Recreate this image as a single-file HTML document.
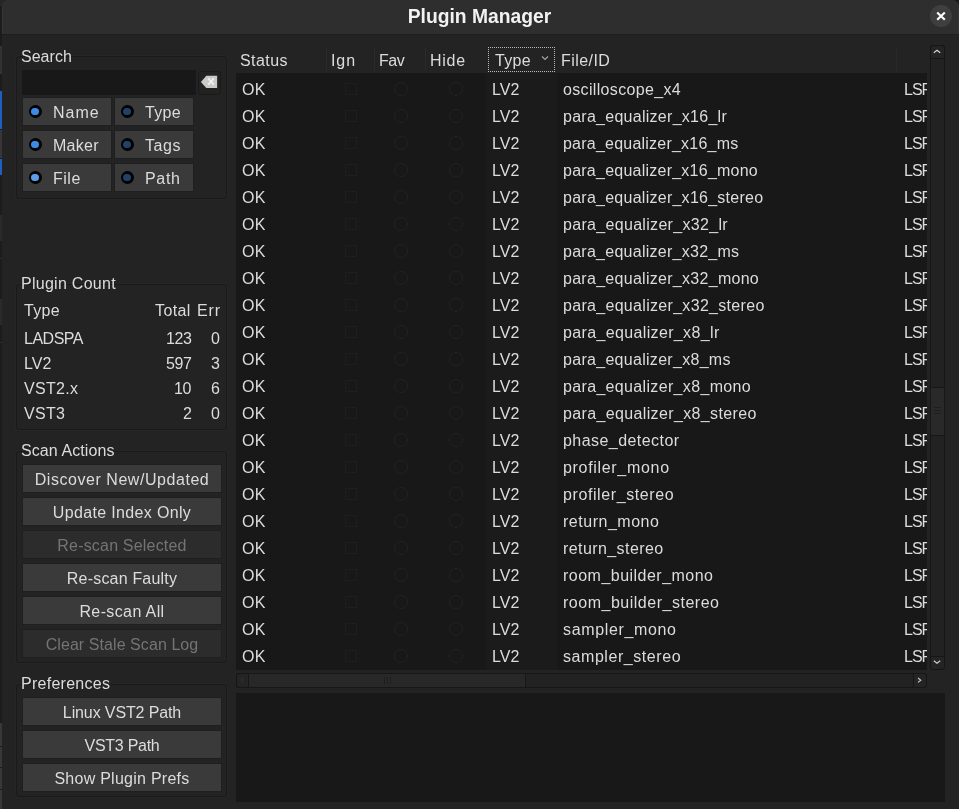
<!DOCTYPE html><html><head><meta charset="utf-8"><style>
*{margin:0;padding:0}
html,body{width:959px;height:809px;overflow:hidden;background:#1c1c1c}
.abs{position:absolute}
.t{position:absolute;font-family:"Liberation Sans",sans-serif;font-size:16px;line-height:18px;color:#dcdcdc;white-space:nowrap;will-change:transform}
.bold{font-weight:bold;color:#f2f2f2}
.lbl{color:#dcdcdc}
.dist{color:#747474}
#win{position:absolute;left:2px;top:20px;width:957px;height:840px;background:#232323}
#title{position:absolute;left:2px;top:0;width:957px;height:34px;background:#2e2e2e;border-radius:8px 8px 0 0;border-bottom:1px solid #1f1f1f;box-shadow:inset 1px 0 0 #363636,inset -1px 0 0 #363636}
#close{position:absolute;left:930px;top:5px;width:22px;height:22px;border-radius:50%;background:#3f3f3f}
#close svg{position:absolute;left:0;top:0}
.frame{position:absolute;border:1px solid #1a1a1a;border-radius:3px;box-shadow:0 0 0 1px #262626}
.btn{position:absolute;background:#3a3a3a;box-shadow:0 0 0 1px #1f1f1f}
.btn.dis{background:#2c2c2c}
.led{position:absolute;width:13px;height:13px;border-radius:50%;background:#000}
.led div{position:absolute;left:2.75px;top:2.75px;width:7.5px;height:7.5px;border-radius:50%}
.clr{position:absolute;left:198px;top:71px;width:23px;height:24px;border:1px solid #1a1a1a;border-radius:3px;background:#222;box-sizing:border-box}
.clr svg{position:absolute;left:-2px;top:-2px}
.circ{width:12px;height:12px;border:1px solid #222;border-radius:50%}
</style></head><body><div class="abs" style="left:0;top:0;width:12px;height:6px;background:#262626"></div>
<div class="abs" style="left:0;top:46px;width:2px;height:28px;background:#333"></div>
<div class="abs" style="left:0;top:91px;width:2px;height:38px;background:#1f5fbf"></div>
<div class="abs" style="left:0;top:130px;width:2px;height:28px;background:#363636"></div>
<div class="abs" style="left:0;top:159px;width:2px;height:16px;background:#1f5fbf"></div>
<div class="abs" style="left:0;top:723px;width:2px;height:86px;background:#383838"></div>
<div class="abs" style="left:0;top:214px;width:2px;height:28px;background:#2a2a2a;border-top:1px solid #1c1c1c;border-bottom:1px solid #1c1c1c;box-sizing:border-box"></div>
<div class="abs" style="left:0;top:298px;width:2px;height:28px;background:#2a2a2a;border-top:1px solid #1c1c1c;border-bottom:1px solid #1c1c1c;box-sizing:border-box"></div>
<div class="abs" style="left:0;top:258px;width:2px;height:1px;background:#2c2c2c"></div>
<div class="abs" style="left:0;top:342px;width:2px;height:1px;background:#2c2c2c"></div>
<div class="abs" style="left:0;top:746px;width:2px;height:1px;background:#1c1c1c"></div>
<div class="abs" style="left:0;top:767px;width:2px;height:1px;background:#1c1c1c"></div>
<div class="abs" style="left:0;top:789px;width:2px;height:1px;background:#1c1c1c"></div>
<div id="win"></div>
<div id="title"></div>
<div class="t bold" style="left:0;width:959px;text-align:center;top:6px;font-size:19.3px;line-height:22px">Plugin Manager</div>
<div id="close"><svg width="22" height="22" viewBox="0 0 22 22"><path d="M7.2 7.4 L14.8 14.8 M14.8 7.4 L7.2 14.8" stroke="#fff" stroke-width="2.1" stroke-linecap="butt"/></svg></div>
<div class="frame" style="left:16px;top:56px;width:209px;height:141px"></div>
<div class="frame" style="left:16px;top:284px;width:209px;height:144px"></div>
<div class="frame" style="left:16px;top:451px;width:209px;height:210px"></div>
<div class="frame" style="left:16px;top:684px;width:209px;height:111px"></div>
<div class="t lbl" style="left:21px;top:48px;letter-spacing:0.02px;">Search</div>
<div class="t lbl" style="left:21px;top:275px;letter-spacing:0.27px;">Plugin Count</div>
<div class="t lbl" style="left:21px;top:442px;letter-spacing:0.09px;">Scan Actions</div>
<div class="t lbl" style="left:21px;top:675px;letter-spacing:0.27px;">Preferences</div>
<div class="abs" style="left:22px;top:70px;width:174px;height:25px;background:#181818"></div>
<div class="clr"><svg width="24" height="24" viewBox="0 0 24 24"><path d="M3.9 11.9 L9.3 5.7 H20.1 V18 H9.3 Z" fill="#c9cbc6"/><path d="M11.3 8.4 L16.8 14.6 M16.8 8.4 L11.3 14.6" stroke="#f2f2f2" stroke-width="1.6"/></svg></div>
<div class="btn" style="left:23px;top:98px;width:88px;height:27px"></div>
<div class="led" style="left:28.5px;top:105px"><div style="background:#3a8be6"></div></div>
<div class="t " style="left:53px;top:104px;letter-spacing:1.0px;">Name</div>
<div class="btn" style="left:115px;top:98px;width:78px;height:27px"></div>
<div class="led" style="left:120.5px;top:105px"><div style="background:#21406a"></div></div>
<div class="t " style="left:145px;top:104px;letter-spacing:0.3px;">Type</div>
<div class="btn" style="left:23px;top:131px;width:88px;height:27px"></div>
<div class="led" style="left:28.5px;top:138px"><div style="background:#3a8be6"></div></div>
<div class="t " style="left:53px;top:137px;letter-spacing:0.25px;">Maker</div>
<div class="btn" style="left:115px;top:131px;width:78px;height:27px"></div>
<div class="led" style="left:120.5px;top:138px"><div style="background:#21406a"></div></div>
<div class="t " style="left:145px;top:137px;letter-spacing:0.6px;">Tags</div>
<div class="btn" style="left:23px;top:164px;width:88px;height:27px"></div>
<div class="led" style="left:28.5px;top:171px"><div style="background:#5a9de8"></div></div>
<div class="t " style="left:53px;top:170px;letter-spacing:0.5px;">File</div>
<div class="btn" style="left:115px;top:164px;width:78px;height:27px"></div>
<div class="led" style="left:120.5px;top:171px"><div style="background:#21406a"></div></div>
<div class="t " style="left:145px;top:170px;letter-spacing:0.7px;">Path</div>
<div class="t " style="left:24px;top:302px;letter-spacing:0.3px;">Type</div>
<div class="t " style="right:768.6px;top:302px;letter-spacing:0.4px;">Total</div>
<div class="t " style="right:738.1px;top:302px;letter-spacing:0.9px;">Err</div>
<div class="t " style="left:24px;top:330px;letter-spacing:-0.5px;">LADSPA</div>
<div class="t " style="right:767.7px;top:330px;letter-spacing:-0.4px;">123</div>
<div class="t " style="right:738.7px;top:330px;letter-spacing:0;">0</div>
<div class="t " style="left:24px;top:355px;letter-spacing:0px;">LV2</div>
<div class="t " style="right:767.7px;top:355px;letter-spacing:-0.4px;">597</div>
<div class="t " style="right:738.7px;top:355px;letter-spacing:0;">3</div>
<div class="t " style="left:24px;top:380px;letter-spacing:0.3px;">VST2.x</div>
<div class="t " style="right:767.7px;top:380px;letter-spacing:-0.4px;">10</div>
<div class="t " style="right:738.7px;top:380px;letter-spacing:0;">6</div>
<div class="t " style="left:24px;top:405px;letter-spacing:0.3px;">VST3</div>
<div class="t " style="right:767.7px;top:405px;letter-spacing:-0.4px;">2</div>
<div class="t " style="right:738.7px;top:405px;letter-spacing:0;">0</div>
<div class="btn" style="left:23px;top:465px;width:198px;height:27px"></div>
<div class="t " style="left:-27.725px;width:300px;text-align:center;top:471px;letter-spacing:0.55px;">Discover New/Updated</div>
<div class="btn" style="left:23px;top:498px;width:198px;height:27px"></div>
<div class="t " style="left:-27.825px;width:300px;text-align:center;top:504px;letter-spacing:0.35px;">Update Index Only</div>
<div class="btn dis" style="left:23px;top:531px;width:198px;height:27px"></div>
<div class="t dist" style="left:-27.905px;width:300px;text-align:center;top:537px;letter-spacing:0.19px;">Re-scan Selected</div>
<div class="btn" style="left:23px;top:564px;width:198px;height:27px"></div>
<div class="t " style="left:-27.905px;width:300px;text-align:center;top:570px;letter-spacing:0.19px;">Re-scan Faulty</div>
<div class="btn" style="left:23px;top:597px;width:198px;height:27px"></div>
<div class="t " style="left:-27.81px;width:300px;text-align:center;top:603px;letter-spacing:0.38px;">Re-scan All</div>
<div class="btn dis" style="left:23px;top:630px;width:198px;height:27px"></div>
<div class="t dist" style="left:-27.965px;width:300px;text-align:center;top:636px;letter-spacing:0.07px;">Clear Stale Scan Log</div>
<div class="btn" style="left:23px;top:698px;width:198px;height:27px"></div>
<div class="t " style="left:-28.06px;width:300px;text-align:center;top:704px;letter-spacing:-0.12px;">Linux VST2 Path</div>
<div class="btn" style="left:23px;top:731px;width:198px;height:27px"></div>
<div class="t " style="left:-28.135px;width:300px;text-align:center;top:737px;letter-spacing:-0.27px;">VST3 Path</div>
<div class="btn" style="left:23px;top:764px;width:198px;height:27px"></div>
<div class="t " style="left:-27.87px;width:300px;text-align:center;top:770px;letter-spacing:0.26px;">Show Plugin Prefs</div>
<div class="t " style="left:239.5px;top:52px;letter-spacing:0.42px;">Status</div>
<div class="t " style="left:330.5px;top:52px;letter-spacing:0.9px;">Ign</div>
<div class="t " style="left:378.5px;top:52px;letter-spacing:-0.4px;">Fav</div>
<div class="t " style="left:429.5px;top:52px;letter-spacing:0.75px;">Hide</div>
<div class="t " style="left:494.5px;top:52px;letter-spacing:0.3px;">Type</div>
<div class="t " style="left:560.5px;top:52px;letter-spacing:0.45px;">File/ID</div>
<div class="abs" style="left:326px;top:48px;width:1px;height:23px;background:#2a2a2a"></div>
<div class="abs" style="left:374px;top:48px;width:1px;height:23px;background:#2a2a2a"></div>
<div class="abs" style="left:425px;top:48px;width:1px;height:23px;background:#2a2a2a"></div>
<div class="abs" style="left:896px;top:48px;width:1px;height:23px;background:#2a2a2a"></div>
<div class="abs" style="left:488px;top:47px;width:67px;height:25px;border:1px dotted #b8b8b8;box-sizing:border-box"></div>
<svg class="abs" style="left:540px;top:54px" width="10" height="8" viewBox="0 0 10 8"><path d="M2 2.5 L5 5.5 L8 2.5" stroke="#9aa6b2" stroke-width="1.2" fill="none"/></svg>
<div class="abs" style="left:236px;top:73px;width:691px;height:597px;background:#181818;overflow:hidden" id="list">
<div class="abs" style="left:250px;top:0;width:71px;height:597px;background:#1b1b1b"></div>
<div class="t " style="left:6px;top:8px;letter-spacing:0.3px;">OK</div>
<div class="abs" style="left:109px;top:10px;width:10px;height:10px;border:1px solid #1e1e1e"></div>
<div class="abs circ" style="left:157.8px;top:9px"></div>
<div class="abs circ" style="left:212.5px;top:9px"></div>
<div class="t " style="left:255.5px;top:8px;letter-spacing:0px;">LV2</div>
<div class="t " style="left:327px;top:8px;letter-spacing:0.343px;">oscilloscope_x4</div>
<div class="t " style="left:668.3px;top:8px;letter-spacing:-1px">LSP</div>
<div class="t " style="left:6px;top:35px;letter-spacing:0.3px;">OK</div>
<div class="abs" style="left:109px;top:37px;width:10px;height:10px;border:1px solid #1e1e1e"></div>
<div class="abs circ" style="left:157.8px;top:36px"></div>
<div class="abs circ" style="left:212.5px;top:36px"></div>
<div class="t " style="left:255.5px;top:35px;letter-spacing:0px;">LV2</div>
<div class="t " style="left:327px;top:35px;letter-spacing:0.27px;">para_equalizer_x16_lr</div>
<div class="t " style="left:668.3px;top:35px;letter-spacing:-1px">LSP</div>
<div class="t " style="left:6px;top:62px;letter-spacing:0.3px;">OK</div>
<div class="abs" style="left:109px;top:64px;width:10px;height:10px;border:1px solid #1e1e1e"></div>
<div class="abs circ" style="left:157.8px;top:63px"></div>
<div class="abs circ" style="left:212.5px;top:63px"></div>
<div class="t " style="left:255.5px;top:62px;letter-spacing:0px;">LV2</div>
<div class="t " style="left:327px;top:62px;letter-spacing:0.225px;">para_equalizer_x16_ms</div>
<div class="t " style="left:668.3px;top:62px;letter-spacing:-1px">LSP</div>
<div class="t " style="left:6px;top:89px;letter-spacing:0.3px;">OK</div>
<div class="abs" style="left:109px;top:91px;width:10px;height:10px;border:1px solid #1e1e1e"></div>
<div class="abs circ" style="left:157.8px;top:90px"></div>
<div class="abs circ" style="left:212.5px;top:90px"></div>
<div class="t " style="left:255.5px;top:89px;letter-spacing:0px;">LV2</div>
<div class="t " style="left:327px;top:89px;letter-spacing:0.241px;">para_equalizer_x16_mono</div>
<div class="t " style="left:668.3px;top:89px;letter-spacing:-1px">LSP</div>
<div class="t " style="left:6px;top:116px;letter-spacing:0.3px;">OK</div>
<div class="abs" style="left:109px;top:118px;width:10px;height:10px;border:1px solid #1e1e1e"></div>
<div class="abs circ" style="left:157.8px;top:117px"></div>
<div class="abs circ" style="left:212.5px;top:117px"></div>
<div class="t " style="left:255.5px;top:116px;letter-spacing:0px;">LV2</div>
<div class="t " style="left:327px;top:116px;letter-spacing:0.258px;">para_equalizer_x16_stereo</div>
<div class="t " style="left:668.3px;top:116px;letter-spacing:-1px">LSP</div>
<div class="t " style="left:6px;top:143px;letter-spacing:0.3px;">OK</div>
<div class="abs" style="left:109px;top:145px;width:10px;height:10px;border:1px solid #1e1e1e"></div>
<div class="abs circ" style="left:157.8px;top:144px"></div>
<div class="abs circ" style="left:212.5px;top:144px"></div>
<div class="t " style="left:255.5px;top:143px;letter-spacing:0px;">LV2</div>
<div class="t " style="left:327px;top:143px;letter-spacing:0.315px;">para_equalizer_x32_lr</div>
<div class="t " style="left:668.3px;top:143px;letter-spacing:-1px">LSP</div>
<div class="t " style="left:6px;top:170px;letter-spacing:0.3px;">OK</div>
<div class="abs" style="left:109px;top:172px;width:10px;height:10px;border:1px solid #1e1e1e"></div>
<div class="abs circ" style="left:157.8px;top:171px"></div>
<div class="abs circ" style="left:212.5px;top:171px"></div>
<div class="t " style="left:255.5px;top:170px;letter-spacing:0px;">LV2</div>
<div class="t " style="left:327px;top:170px;letter-spacing:0.265px;">para_equalizer_x32_ms</div>
<div class="t " style="left:668.3px;top:170px;letter-spacing:-1px">LSP</div>
<div class="t " style="left:6px;top:197px;letter-spacing:0.3px;">OK</div>
<div class="abs" style="left:109px;top:199px;width:10px;height:10px;border:1px solid #1e1e1e"></div>
<div class="abs circ" style="left:157.8px;top:198px"></div>
<div class="abs circ" style="left:212.5px;top:198px"></div>
<div class="t " style="left:255.5px;top:197px;letter-spacing:0px;">LV2</div>
<div class="t " style="left:327px;top:197px;letter-spacing:0.286px;">para_equalizer_x32_mono</div>
<div class="t " style="left:668.3px;top:197px;letter-spacing:-1px">LSP</div>
<div class="t " style="left:6px;top:224px;letter-spacing:0.3px;">OK</div>
<div class="abs" style="left:109px;top:226px;width:10px;height:10px;border:1px solid #1e1e1e"></div>
<div class="abs circ" style="left:157.8px;top:225px"></div>
<div class="abs circ" style="left:212.5px;top:225px"></div>
<div class="t " style="left:255.5px;top:224px;letter-spacing:0px;">LV2</div>
<div class="t " style="left:327px;top:224px;letter-spacing:0.308px;">para_equalizer_x32_stereo</div>
<div class="t " style="left:668.3px;top:224px;letter-spacing:-1px">LSP</div>
<div class="t " style="left:6px;top:251px;letter-spacing:0.3px;">OK</div>
<div class="abs" style="left:109px;top:253px;width:10px;height:10px;border:1px solid #1e1e1e"></div>
<div class="abs circ" style="left:157.8px;top:252px"></div>
<div class="abs circ" style="left:212.5px;top:252px"></div>
<div class="t " style="left:255.5px;top:251px;letter-spacing:0px;">LV2</div>
<div class="t " style="left:327px;top:251px;letter-spacing:0.358px;">para_equalizer_x8_lr</div>
<div class="t " style="left:668.3px;top:251px;letter-spacing:-1px">LSP</div>
<div class="t " style="left:6px;top:278px;letter-spacing:0.3px;">OK</div>
<div class="abs" style="left:109px;top:280px;width:10px;height:10px;border:1px solid #1e1e1e"></div>
<div class="abs circ" style="left:157.8px;top:279px"></div>
<div class="abs circ" style="left:212.5px;top:279px"></div>
<div class="t " style="left:255.5px;top:278px;letter-spacing:0px;">LV2</div>
<div class="t " style="left:327px;top:278px;letter-spacing:0.295px;">para_equalizer_x8_ms</div>
<div class="t " style="left:668.3px;top:278px;letter-spacing:-1px">LSP</div>
<div class="t " style="left:6px;top:305px;letter-spacing:0.3px;">OK</div>
<div class="abs" style="left:109px;top:307px;width:10px;height:10px;border:1px solid #1e1e1e"></div>
<div class="abs circ" style="left:157.8px;top:306px"></div>
<div class="abs circ" style="left:212.5px;top:306px"></div>
<div class="t " style="left:255.5px;top:305px;letter-spacing:0px;">LV2</div>
<div class="t " style="left:327px;top:305px;letter-spacing:0.338px;">para_equalizer_x8_mono</div>
<div class="t " style="left:668.3px;top:305px;letter-spacing:-1px">LSP</div>
<div class="t " style="left:6px;top:332px;letter-spacing:0.3px;">OK</div>
<div class="abs" style="left:109px;top:334px;width:10px;height:10px;border:1px solid #1e1e1e"></div>
<div class="abs circ" style="left:157.8px;top:333px"></div>
<div class="abs circ" style="left:212.5px;top:333px"></div>
<div class="t " style="left:255.5px;top:332px;letter-spacing:0px;">LV2</div>
<div class="t " style="left:327px;top:332px;letter-spacing:0.361px;">para_equalizer_x8_stereo</div>
<div class="t " style="left:668.3px;top:332px;letter-spacing:-1px">LSP</div>
<div class="t " style="left:6px;top:359px;letter-spacing:0.3px;">OK</div>
<div class="abs" style="left:109px;top:361px;width:10px;height:10px;border:1px solid #1e1e1e"></div>
<div class="abs circ" style="left:157.8px;top:360px"></div>
<div class="abs circ" style="left:212.5px;top:360px"></div>
<div class="t " style="left:255.5px;top:359px;letter-spacing:0px;">LV2</div>
<div class="t " style="left:327px;top:359px;letter-spacing:0.446px;">phase_detector</div>
<div class="t " style="left:668.3px;top:359px;letter-spacing:-1px">LSP</div>
<div class="t " style="left:6px;top:386px;letter-spacing:0.3px;">OK</div>
<div class="abs" style="left:109px;top:388px;width:10px;height:10px;border:1px solid #1e1e1e"></div>
<div class="abs circ" style="left:157.8px;top:387px"></div>
<div class="abs circ" style="left:212.5px;top:387px"></div>
<div class="t " style="left:255.5px;top:386px;letter-spacing:0px;">LV2</div>
<div class="t " style="left:327px;top:386px;letter-spacing:0.683px;">profiler_mono</div>
<div class="t " style="left:668.3px;top:386px;letter-spacing:-1px">LSP</div>
<div class="t " style="left:6px;top:413px;letter-spacing:0.3px;">OK</div>
<div class="abs" style="left:109px;top:415px;width:10px;height:10px;border:1px solid #1e1e1e"></div>
<div class="abs circ" style="left:157.8px;top:414px"></div>
<div class="abs circ" style="left:212.5px;top:414px"></div>
<div class="t " style="left:255.5px;top:413px;letter-spacing:0px;">LV2</div>
<div class="t " style="left:327px;top:413px;letter-spacing:0.593px;">profiler_stereo</div>
<div class="t " style="left:668.3px;top:413px;letter-spacing:-1px">LSP</div>
<div class="t " style="left:6px;top:440px;letter-spacing:0.3px;">OK</div>
<div class="abs" style="left:109px;top:442px;width:10px;height:10px;border:1px solid #1e1e1e"></div>
<div class="abs circ" style="left:157.8px;top:441px"></div>
<div class="abs circ" style="left:212.5px;top:441px"></div>
<div class="t " style="left:255.5px;top:440px;letter-spacing:0px;">LV2</div>
<div class="t " style="left:327px;top:440px;letter-spacing:0.52px;">return_mono</div>
<div class="t " style="left:668.3px;top:440px;letter-spacing:-1px">LSP</div>
<div class="t " style="left:6px;top:467px;letter-spacing:0.3px;">OK</div>
<div class="abs" style="left:109px;top:469px;width:10px;height:10px;border:1px solid #1e1e1e"></div>
<div class="abs circ" style="left:157.8px;top:468px"></div>
<div class="abs circ" style="left:212.5px;top:468px"></div>
<div class="t " style="left:255.5px;top:467px;letter-spacing:0px;">LV2</div>
<div class="t " style="left:327px;top:467px;letter-spacing:0.417px;">return_stereo</div>
<div class="t " style="left:668.3px;top:467px;letter-spacing:-1px">LSP</div>
<div class="t " style="left:6px;top:494px;letter-spacing:0.3px;">OK</div>
<div class="abs" style="left:109px;top:496px;width:10px;height:10px;border:1px solid #1e1e1e"></div>
<div class="abs circ" style="left:157.8px;top:495px"></div>
<div class="abs circ" style="left:212.5px;top:495px"></div>
<div class="t " style="left:255.5px;top:494px;letter-spacing:0px;">LV2</div>
<div class="t " style="left:327px;top:494px;letter-spacing:0.481px;">room_builder_mono</div>
<div class="t " style="left:668.3px;top:494px;letter-spacing:-1px">LSP</div>
<div class="t " style="left:6px;top:521px;letter-spacing:0.3px;">OK</div>
<div class="abs" style="left:109px;top:523px;width:10px;height:10px;border:1px solid #1e1e1e"></div>
<div class="abs circ" style="left:157.8px;top:522px"></div>
<div class="abs circ" style="left:212.5px;top:522px"></div>
<div class="t " style="left:255.5px;top:521px;letter-spacing:0px;">LV2</div>
<div class="t " style="left:327px;top:521px;letter-spacing:0.511px;">room_builder_stereo</div>
<div class="t " style="left:668.3px;top:521px;letter-spacing:-1px">LSP</div>
<div class="t " style="left:6px;top:548px;letter-spacing:0.3px;">OK</div>
<div class="abs" style="left:109px;top:550px;width:10px;height:10px;border:1px solid #1e1e1e"></div>
<div class="abs circ" style="left:157.8px;top:549px"></div>
<div class="abs circ" style="left:212.5px;top:549px"></div>
<div class="t " style="left:255.5px;top:548px;letter-spacing:0px;">LV2</div>
<div class="t " style="left:327px;top:548px;letter-spacing:0.645px;">sampler_mono</div>
<div class="t " style="left:668.3px;top:548px;letter-spacing:-1px">LSP</div>
<div class="t " style="left:6px;top:575px;letter-spacing:0.3px;">OK</div>
<div class="abs" style="left:109px;top:577px;width:10px;height:10px;border:1px solid #1e1e1e"></div>
<div class="abs circ" style="left:157.8px;top:576px"></div>
<div class="abs circ" style="left:212.5px;top:576px"></div>
<div class="t " style="left:255.5px;top:575px;letter-spacing:0px;">LV2</div>
<div class="t " style="left:327px;top:575px;letter-spacing:0.562px;">sampler_stereo</div>
<div class="t " style="left:668.3px;top:575px;letter-spacing:-1px">LSP</div>
</div>
<div class="abs" style="left:930px;top:45px;width:13px;height:622px;border:1px solid #161616;border-radius:3px;background:#222"></div>
<div class="abs" style="left:930px;top:45px;width:13px;height:12px;border:1px solid #161616;border-radius:3px 3px 0 0;background:#242424"></div>
<svg class="abs" style="left:931px;top:46px" width="13" height="12"><path d="M2.8 6.8 L6 4.3 L9.2 6.8" stroke="#d0d0d0" stroke-width="1.2" fill="none"/></svg>
<div class="abs" style="left:930px;top:656px;width:13px;height:12px;border:1px solid #161616;border-radius:0 0 3px 3px;background:#242424"></div>
<svg class="abs" style="left:931px;top:657px" width="13" height="12"><path d="M2.8 3.8 L6 6.3 L9.2 3.8" stroke="#d0d0d0" stroke-width="1.2" fill="none"/></svg>
<div class="abs" style="left:930px;top:387px;width:15px;height:49px;background:#292929;border:1px solid #171717;box-sizing:border-box;border-radius:1px"></div>
<div class="abs" style="left:934px;top:407px;width:7px;height:1px;background:#1e1e1e"></div>
<div class="abs" style="left:934px;top:410px;width:7px;height:1px;background:#1e1e1e"></div>
<div class="abs" style="left:934px;top:413px;width:7px;height:1px;background:#1e1e1e"></div>
<div class="abs" style="left:236px;top:673px;width:689px;height:13px;border:1px solid #161616;border-radius:3px;background:#222"></div>
<div class="abs" style="left:236px;top:673px;width:13px;height:15px;border:1px solid #161616;border-radius:3px 0 0 3px;background:#242424;box-sizing:border-box"></div>
<div class="abs" style="left:248px;top:673px;width:278px;height:15px;background:#282828;border:1px solid #171717;box-sizing:border-box"></div>
<div class="abs" style="left:384px;top:677px;width:1px;height:7px;background:#1e1e1e"></div>
<div class="abs" style="left:387px;top:677px;width:1px;height:7px;background:#1e1e1e"></div>
<div class="abs" style="left:390px;top:677px;width:1px;height:7px;background:#1e1e1e"></div>
<svg class="abs" style="left:237px;top:674px" width="12" height="13"><path d="M6.8 3.8 L4 6.1 L6.8 8.4" stroke="#303030" stroke-width="1.1" fill="none"/></svg>
<div class="abs" style="left:913px;top:673px;width:14px;height:15px;border:1px solid #161616;border-radius:0 3px 3px 0;background:#242424;box-sizing:border-box"></div>
<svg class="abs" style="left:912.8px;top:674px" width="13" height="13"><path d="M5 4 L7.8 6.2 L5 8.4" stroke="#c8c8c8" stroke-width="1.1" fill="none"/></svg>
<div class="abs" style="left:236px;top:693px;width:709px;height:109px;background:#181818"></div></body></html>
